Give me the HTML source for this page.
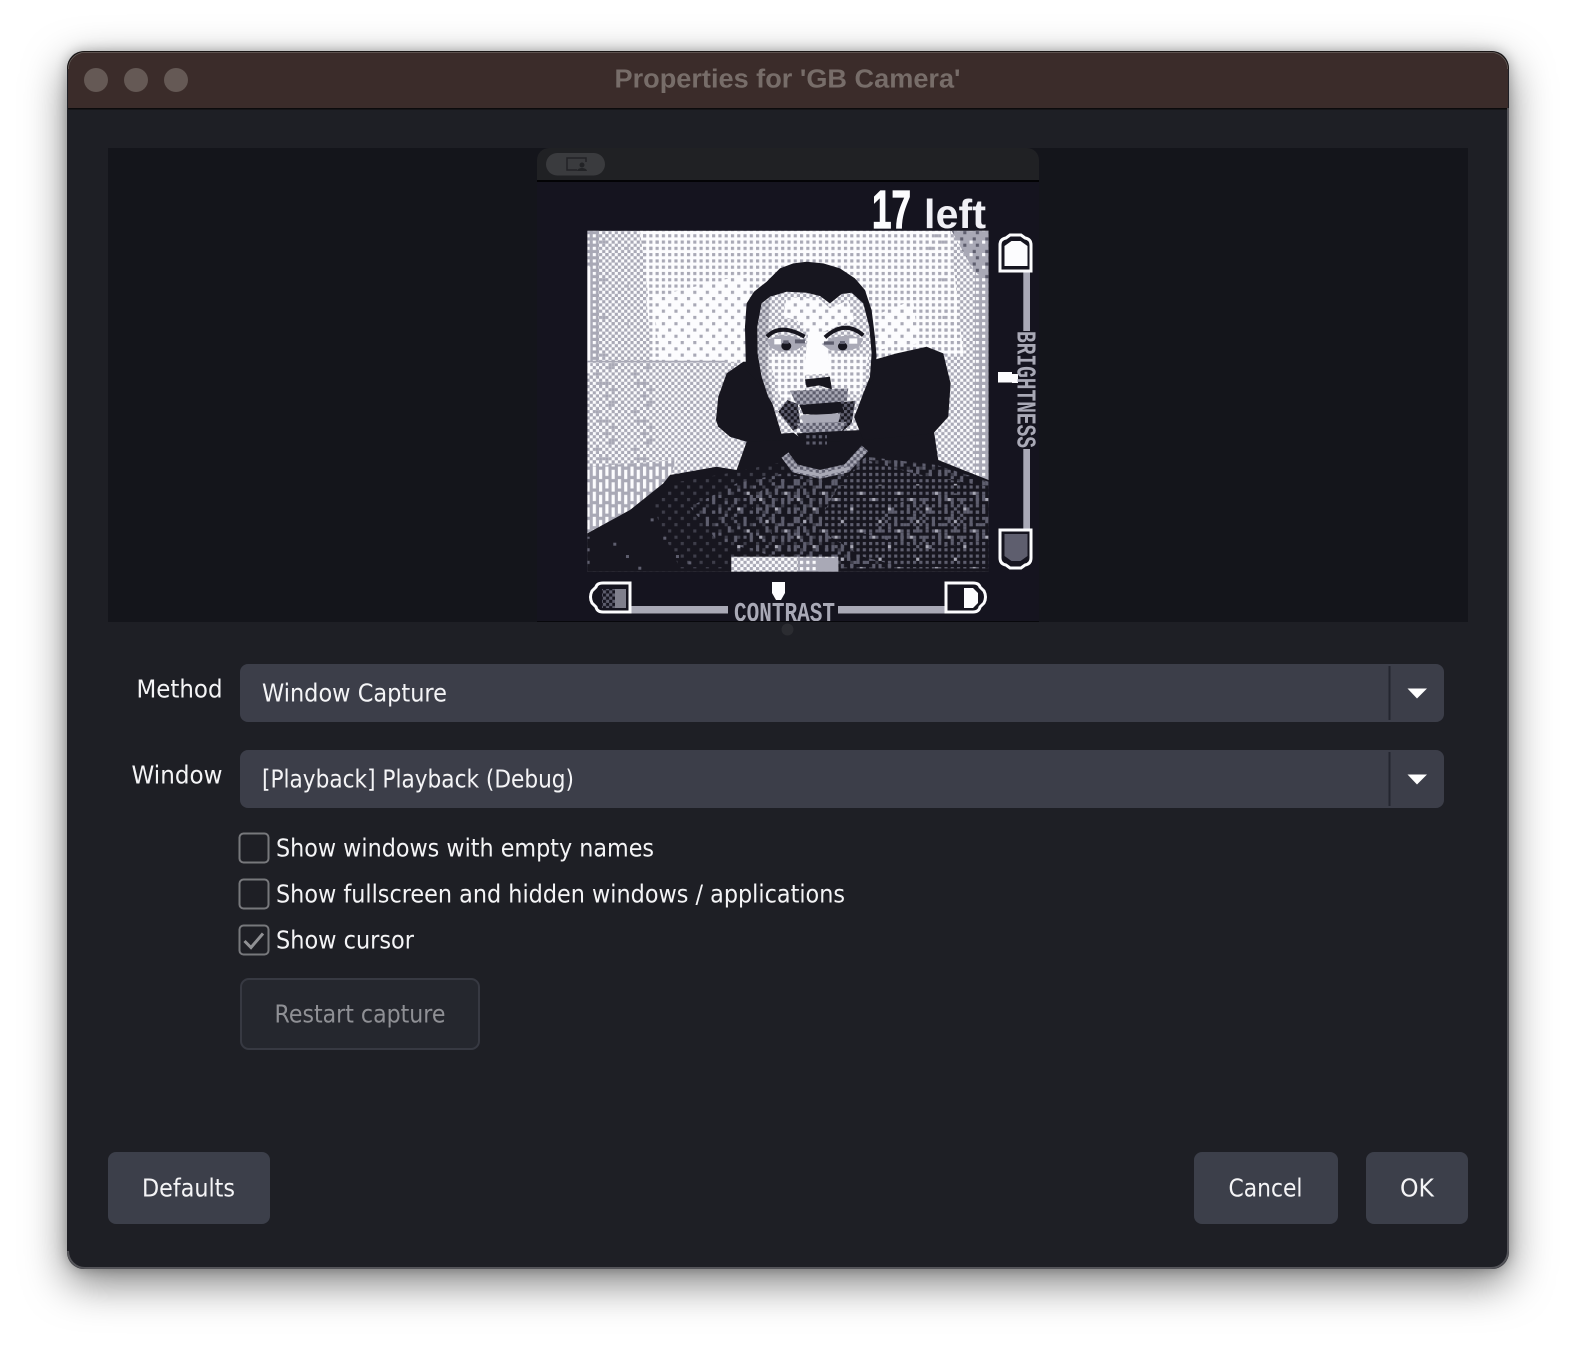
<!DOCTYPE html>
<html><head><meta charset="utf-8"><title>Properties for 'GB Camera'</title>
<style>
html,body{margin:0;padding:0;background:#fff;width:1576px;height:1352px;overflow:hidden}
#win{position:absolute;left:67px;top:51px;width:1442px;height:1218px;box-sizing:border-box;border-radius:17px;background:#1e1f25;box-shadow:0 14px 42px rgba(0,0,0,.5),0 0 12px rgba(0,0,0,.25)}
svg{position:absolute;left:0;top:0}
.t{font-family:"DejaVu Sans","Liberation Sans",sans-serif;font-size:24.5px;fill:#f4f4f6}
</style></head><body>
<div id="win"></div>
<svg width="1576" height="1352" viewBox="0 0 1576 1352" xmlns="http://www.w3.org/2000/svg">
<defs>
<pattern id="a" width="18.84" height="18.84" patternUnits="userSpaceOnUse"><rect width="19" height="19" fill="#fcfcfe"/><rect width="9.42" height="9.42" fill="#a9a9b6"/></pattern>
<pattern id="a2" width="37.68" height="37.68" patternUnits="userSpaceOnUse"><rect width="38" height="38" fill="#fcfcfe"/><rect width="9.42" height="9.42" fill="#a9a9b6"/><rect x="18.84" y="18.84" width="9.42" height="9.42" fill="#a9a9b6"/></pattern>
<pattern id="b" width="18.84" height="18.84" patternUnits="userSpaceOnUse"><rect width="19" height="19" fill="#fcfcfe"/><rect width="9.42" height="9.42" fill="#a9a9b6"/><rect x="9.42" y="9.42" width="9.42" height="9.42" fill="#a9a9b6"/></pattern>
<pattern id="c" width="18.84" height="18.84" patternUnits="userSpaceOnUse"><rect width="19" height="19" fill="#a9a9b6"/><rect width="9.42" height="9.42" fill="#fcfcfe"/></pattern>
<pattern id="vs" width="37.68" height="37.68" patternUnits="userSpaceOnUse"><rect width="38" height="38" fill="#a9a9b6"/><rect width="9.42" height="28" fill="#fcfcfe"/><rect x="18.84" y="9.42" width="9.42" height="28" fill="#fcfcfe"/></pattern>
<pattern id="cd" width="37.68" height="37.68" patternUnits="userSpaceOnUse"><rect width="38" height="38" fill="#a9a9b6"/><rect width="9.42" height="9.42" fill="#fcfcfe"/><rect x="18.84" y="9.42" width="9.42" height="9.42" fill="#5e5e6e"/><rect x="9.42" y="28.26" width="9.42" height="9.42" fill="#5e5e6e"/></pattern>
<pattern id="fd" width="18.84" height="18.84" patternUnits="userSpaceOnUse"><rect width="19" height="19" fill="#a9a9b6"/><rect width="9.42" height="9.42" fill="#5e5e6e"/><rect x="9.42" y="9.42" width="9.42" height="9.42" fill="#5e5e6e"/></pattern>
<pattern id="d1" width="37.68" height="37.68" patternUnits="userSpaceOnUse"><rect width="38" height="38" fill="#17161f"/><rect width="9.42" height="9.42" fill="#5e5e6e"/><rect x="18.84" y="18.84" width="9.42" height="9.42" fill="#5e5e6e"/></pattern>
<pattern id="d3" width="18.84" height="18.84" patternUnits="userSpaceOnUse"><rect width="19" height="19" fill="#17161f"/><rect width="9.42" height="9.42" fill="#5e5e6e"/><rect x="9.42" y="9.42" width="9.42" height="9.42" fill="#5e5e6e"/></pattern>
<pattern id="d2" width="18.84" height="18.84" patternUnits="userSpaceOnUse"><rect width="19" height="19" fill="#17161f"/><rect width="9.42" height="9.42" fill="#5e5e6e"/></pattern>
<pattern id="n1" width="113.04" height="113.04" patternUnits="userSpaceOnUse"><path transform="scale(9.42)" fill="#5e5e6e" d="M1 0h1v2h-1zM5 1h1v1h-1zM8 0h1v3h-1zM11 2h1v1h-1zM3 3h1v2h-1zM6 3h1v1h-1zM0 5h1v1h-1zM10 5h1v3h-1zM5 6h1v2h-1zM2 7h1v1h-1zM8 6h1v1h-1zM0 9h1v2h-1zM3 9h1v1h-1zM7 9h1v2h-1zM10 10h1v1h-1zM5 11h1v1h-1zM2 11h1v1h-1z"/></pattern>
<pattern id="n2" width="113.04" height="113.04" patternUnits="userSpaceOnUse" patternTransform="translate(47.1 28.26)"><path transform="scale(9.42)" fill="#5e5e6e" d="M1 0h1v2h-1zM5 1h1v1h-1zM8 0h1v3h-1zM11 2h1v1h-1zM3 3h1v2h-1zM6 3h1v1h-1zM0 5h1v1h-1zM10 5h1v3h-1zM5 6h1v2h-1zM2 7h1v1h-1zM8 6h1v1h-1zM0 9h1v2h-1zM3 9h1v1h-1zM7 9h1v2h-1zM10 10h1v1h-1zM5 11h1v1h-1zM2 11h1v1h-1z"/></pattern>
<pattern id="n3" width="113.04" height="113.04" patternUnits="userSpaceOnUse"><path transform="scale(9.42)" fill="#a9a9b6" d="M3 1h1v1h-1zM9 4h1v1h-1zM1 6h1v1h-1zM6 9h1v1h-1z"/></pattern>
<pattern id="n4" width="113.04" height="113.04" patternUnits="userSpaceOnUse"><path transform="scale(9.42)" fill="#a9a9b6" d="M1 0h1v1h-1zM5 1h1v1h-1zM9 2h1v1h-1zM3 3h1v1h-1zM7 3h1v1h-1zM0 5h1v1h-1zM10 5h1v1h-1zM5 7h1v1h-1zM2 7h1v1h-1zM8 6h1v1h-1zM0 9h1v1h-1zM3 9h1v1h-1zM7 9h1v1h-1zM10 10h1v1h-1zM5 11h1v1h-1zM2 11h1v1h-1z"/></pattern>
<pattern id="n5" width="113.04" height="113.04" patternUnits="userSpaceOnUse"><path transform="scale(9.42)" fill="#a9a9b6" d="M0 0h1v1h-1zM4 0h1v1h-1zM10 2h1v1h-1zM2 2h1v1h-1zM6 4h1v1h-1zM0 6h1v1h-1zM9 6h1v1h-1zM4 8h1v1h-1zM11 8h1v1h-1zM2 10h1v1h-1zM7 10h1v1h-1z"/></pattern>
<pattern id="sm" width="6.280" height="6.280" patternUnits="userSpaceOnUse"><rect width="7" height="7" fill="#15141f"/><rect width="3.140" height="3.140" fill="#5e5e6e"/><rect x="3.140" y="3.140" width="3.140" height="3.140" fill="#5e5e6e"/></pattern>
<clipPath id="pv"><rect x="108" y="148" width="1360" height="474"/></clipPath>
</defs>

<!-- title bar -->
<path d="M68 108V69a17 17 0 0 1 17-17H1491a17 17 0 0 1 17 17V108Z" fill="#3b2c2a"/>
<path d="M68 69a17 17 0 0 1 17-17H1491a17 17 0 0 1 17 17" fill="none" stroke="#6a605c" stroke-width="1.5"/>
<path d="M67.5 69a17.500 17.500 0 0 1 17.500-17.500H1491a17.500 17.500 0 0 1 17.500 17.500" fill="none" stroke="#1a1615" stroke-width="1"/>
<rect x="68" y="108" width="1440" height="1.500" fill="#0c0b0c"/>
<circle cx="96" cy="80" r="12" fill="#655955"/><circle cx="136" cy="80" r="12" fill="#655955"/><circle cx="176" cy="80" r="12" fill="#655955"/>
<text x="614.500" y="87.500" font-family="'Liberation Sans',sans-serif" font-weight="700" font-size="25.500" fill="#776d69" textLength="346" lengthAdjust="spacingAndGlyphs">Properties for 'GB Camera'</text>
<path d="M68 1251a17 17 0 0 0 17 17H1491a17 17 0 0 0 17-17V108" fill="none" stroke="#55555a" stroke-width="2"/>

<!-- preview -->
<rect x="108" y="148" width="1360" height="474" fill="#14151b"/>
<g clip-path="url(#pv)">
<path d="M537 622V160a12 12 0 0 1 12-12H1027a12 12 0 0 1 12 12V622Z" fill="#15141f"/>
<path d="M537 180V160a12 12 0 0 1 12-12H1027a12 12 0 0 1 12 12V180Z" fill="#202124"/>
<rect x="537" y="180" width="502" height="2" fill="#030305"/>
<rect x="546" y="153" width="59" height="22.500" rx="11.250" fill="#3a3b3e"/>
<path d="M577 170H567V158H586V162" fill="none" stroke="#222326" stroke-width="1.500"/>
<circle cx="582" cy="165" r="2.500" fill="#222326"/><path d="M577 171a5 3 0 0 1 10 0Z" fill="#222326"/>

<!-- 17 left -->
<text x="872" y="228" font-family="'Liberation Sans',sans-serif" font-weight="700" font-size="54" fill="#fcfcfe" stroke="#fcfcfe" stroke-width="1.200" textLength="39" lengthAdjust="spacingAndGlyphs">17</text>
<text x="924" y="228" font-family="'Liberation Sans',sans-serif" font-weight="700" font-size="41" fill="#f0f0f5" textLength="62" lengthAdjust="spacing">left</text>

<!-- photo -->
<svg x="587.3" y="230.7" width="401.3" height="341" viewBox="172 272 1204 1023" preserveAspectRatio="none">
<rect x="172" y="272" width="1204" height="1023" fill="url(#b)"/>
<polygon points="330,272 1260,272 1300,640 1040,665 380,665" fill="url(#a)"/>
<polygon points="330,272 1260,272 1300,640 1040,665 380,665" fill="url(#n5)"/>
<polygon points="400,280 1170,280 1235,420 1240,630 1040,635 1040,440 650,480 640,665 365,665 350,480" fill="url(#a)"/>
<polygon points="370,470 660,400 650,665 390,665" fill="url(#a2)"/>
<polygon points="1050,520 1150,480 1165,610 1040,630" fill="url(#a2)"/>
<rect x="172" y="272" width="34" height="393" fill="url(#c)"/>
<rect x="206" y="272" width="90" height="393" fill="url(#n5)"/>
<rect x="172" y="380" width="9" height="320" fill="#fcfcfe"/>
<polygon points="172,665 360,665 400,1010 172,1040" fill="url(#n4)"/>
<polygon points="172,980 440,960 410,1030 300,1110 172,1180" fill="url(#vs)"/>
<rect x="172" y="662" width="420" height="5" fill="#a9a9b6"/>
<rect x="1335" y="272" width="41" height="750" fill="url(#c)"/>
<polygon points="1265,272 1376,272 1376,430 1330,390" fill="url(#cd)"/>

<polygon points="172,1180 300,1110 400,1030 420,1005 560,980 620,990 650,905 760,880 1000,870 1210,860 1225,960 1300,990 1376,1020 1376,1295 172,1295" fill="#17161f"/>
<polygon points="558,840 565,770 590,700 640,665 690,665 760,900 650,905 600,890 565,860" fill="#17161f"/>
<polygon points="1030,660 1100,640 1190,620 1240,640 1262,730 1255,830 1210,880 1000,900 960,800" fill="#17161f"/>
<polygon points="648,690 645,560 650,490 672,455 710,425 750,385 790,370 830,365 880,370 930,385 975,415 1005,450 1025,510 1035,590 1040,650 1030,720 900,800 720,760" fill="#17161f"/>

<!-- sweater -->
<polygon points="370,1100 420,1030 620,995 760,965 800,1010 900,1020 1000,950 1220,975 1376,1025 1376,1285 900,1285 450,1285 400,1180" fill="url(#d1)" opacity=".55"/>
<polygon points="480,1100 620,1030 760,1000 900,1020 1010,950 1220,975 1376,1025 1376,1285 860,1285 700,1240 560,1200" fill="url(#n1)"/>
<polygon points="650,1080 760,1010 900,1025 1010,950 1220,975 1376,1030 1376,1285 900,1285 760,1230" fill="url(#n2)"/>
<polygon points="880,1120 930,1030 1010,960 1150,1000 1376,1040 1376,1285 1130,1285 1000,1250 900,1190" fill="url(#d2)"/>
<polygon points="1000,1180 1100,1090 1220,1060 1376,1060 1376,1200 1180,1230" fill="url(#n1)"/>
<polygon points="620,1040 1376,1030 1376,1285 620,1285" fill="url(#n3)"/>
<rect x="250" y="1208" width="9" height="9" fill="#5e5e6e"/><rect x="288" y="1245" width="9" height="9" fill="#5e5e6e"/><rect x="325" y="1280" width="9" height="9" fill="#5e5e6e"/><rect x="400" y="1190" width="9" height="9" fill="#5e5e6e"/><rect x="438" y="1245" width="9" height="9" fill="#5e5e6e"/><rect x="362" y="1135" width="9" height="9" fill="#5e5e6e"/><rect x="475" y="1264" width="9" height="9" fill="#5e5e6e"/>
<rect x="172" y="1190" width="8" height="105" fill="url(#d1)"/>
<rect x="604" y="1250" width="200" height="45" fill="url(#b)"/>
<rect x="804" y="1250" width="121" height="45" fill="url(#c)"/>
<rect x="865" y="1260" width="60" height="35" fill="#a9a9b6"/>

<!-- collar -->
<polyline points="765,945 795,985 870,1003 950,985 1005,925" fill="none" stroke="url(#fd)" stroke-width="26"/>
<polyline points="790,990 870,1005 955,985" fill="none" stroke="#a9a9b6" stroke-width="9"/>

<!-- face -->
<polygon points="683,640 682,560 695,490 720,470 770,455 830,458 870,468 900,490 935,462 965,458 1000,490 1018,560 1025,640 1020,710 1000,760 985,800 965,850 930,890 880,905 820,900 780,870 745,820 715,770 695,710" fill="url(#b)"/>
<polygon points="683,640 682,560 695,490 722,470 715,560 712,700 735,800 715,770 695,710" fill="url(#fd)" opacity=".5"/>
<polygon points="770,470 870,478 900,505 955,480 972,540 880,575 850,600 800,540 760,530" fill="url(#a2)"/>
<polygon points="835,580 890,575 900,700 820,705" fill="#fcfcfe"/>
<polygon points="715,650 825,640 825,785 755,785" fill="url(#a)"/>
<polygon points="895,640 1015,650 990,770 900,735" fill="url(#a)"/>
<!-- eyes -->
<polygon points="710,600 750,585 800,590 830,610 800,630 750,636 720,622" fill="#a9a9b6"/>
<polygon points="875,612 910,592 960,585 1000,598 985,624 940,634 900,630" fill="#a9a9b6"/>
<rect x="733" y="597" width="20" height="16" fill="#fcfcfe"/><rect x="958" y="595" width="24" height="16" fill="#fcfcfe"/>
<rect x="795" y="598" width="30" height="12" fill="#5e5e6e"/><rect x="882" y="604" width="30" height="10" fill="#5e5e6e"/>
<ellipse cx="769" cy="618" rx="15" ry="13" fill="#17161f"/><ellipse cx="938" cy="619" rx="14" ry="12" fill="#17161f"/>
<rect x="760" y="601" width="16" height="10" fill="#5e5e6e"/><rect x="930" y="603" width="15" height="9" fill="#5e5e6e"/>
<path d="M711 590Q752 548 824 590" fill="none" stroke="#17161f" stroke-width="12"/>
<path d="M885 592Q945 538 1000 586" fill="none" stroke="#17161f" stroke-width="12"/>
<!-- nose, mouth -->
<polygon points="780,752 955,745 950,788 800,795" fill="url(#fd)"/>
<polygon points="745,815 772,780 803,792 812,860 790,872" fill="url(#d3)"/>
<polygon points="930,788 976,782 965,850 930,882 918,850" fill="url(#d3)"/>
<polygon points="825,718 900,710 906,748 868,736 830,742" fill="#17161f"/>
<polygon points="808,795 932,785 942,815 882,826 820,822" fill="#17161f"/>
<polygon points="812,826 932,820 925,848 820,850" fill="#a9a9b6"/>
<polygon points="800,850 950,845 932,882 818,882" fill="url(#fd)"/>
<polygon points="800,880 945,872 930,905 815,905" fill="#17161f"/>
<rect x="825" y="884" width="66" height="30" fill="url(#d2)"/>
</svg>

<!-- brightness -->
<rect x="1023.300" y="272" width="6.700" height="59" fill="#a9a9b6"/>
<rect x="1023.300" y="449" width="6.700" height="80" fill="#a9a9b6"/>
<path d="M1000 271V245q0-6 6-7l4-3h11l4 3q6 1 6 7V271Z" fill="#15141f" stroke="#fcfcfe" stroke-width="3"/>
<path d="M1004.500 266V246l7-5h9l7 5V266Z" fill="#fcfcfe"/>
<path d="M1000 530V558q0 6 6 7l4 3h11l4-3q6-1 6-7V530Z" fill="#15141f" stroke="#fcfcfe" stroke-width="3"/>
<path d="M1004.500 534V556l7 5h9l7-5V534Z" fill="#5e5e6e"/>
<rect x="998" y="372" width="14" height="10.500" fill="#fcfcfe"/><rect x="1012" y="374" width="6" height="9" fill="#fcfcfe"/>
<text transform="translate(1017.500 331) rotate(90)" font-family="'Liberation Mono',monospace" font-weight="700" font-size="27" fill="#a9a9b6" textLength="117" lengthAdjust="spacingAndGlyphs">BRIGHTNESS</text>

<!-- contrast -->
<rect x="631" y="606" width="97" height="7.500" fill="#a9a9b6"/>
<rect x="838" y="606" width="107" height="7.500" fill="#a9a9b6"/>
<path d="M630 583H603q-6 0-7 4l-4 4q-3 6 0 12l4 4q1 5 7 5H630Z" fill="#15141f" stroke="#fcfcfe" stroke-width="3"/>
<rect x="602" y="589" width="13" height="19" fill="url(#sm)"/><rect x="615" y="589" width="11" height="19" fill="#7f7f8c"/>
<path d="M946 583H973q6 0 7 4l4 4q3 6 0 12l-4 4q-1 5-7 5H946Z" fill="#15141f" stroke="#fcfcfe" stroke-width="3"/>
<path d="M964 588H973l5 5v10l-5 5H964Z" fill="#fcfcfe"/>
<path d="M772 582H785V593L781 600H776L772 593Z" fill="#fcfcfe"/>
<text x="734" y="621" font-family="'Liberation Mono',monospace" font-weight="700" font-size="27" fill="#a9a9b6" textLength="101" lengthAdjust="spacingAndGlyphs">CONTRAST</text>
</g>
<rect x="537" y="621" width="502" height="1" fill="#08080c"/>
<circle cx="787.500" cy="629.500" r="6" fill="#2b2c31"/>

<!-- combos -->
<rect x="240" y="664" width="1204" height="58" rx="8" fill="#3c3e49"/>
<rect x="1388.500" y="666" width="2" height="54" fill="#242630"/>
<path d="M1407.500 688.500H1427L1417 698.500Z" fill="#fff"/>
<rect x="240" y="750" width="1204" height="58" rx="8" fill="#3c3e49"/>
<rect x="1388.500" y="752" width="2" height="54" fill="#242630"/>
<path d="M1407.500 774.500H1427L1417 784.500Z" fill="#fff"/>

<text class="t" x="136.500" y="697.500" textLength="86" lengthAdjust="spacingAndGlyphs">Method</text>
<text class="t" x="131.500" y="783.500" textLength="91" lengthAdjust="spacingAndGlyphs">Window</text>
<text class="t" x="262" y="701.500" textLength="185" lengthAdjust="spacingAndGlyphs">Window Capture</text>
<text class="t" x="262" y="787.500" textLength="312" lengthAdjust="spacingAndGlyphs">[Playback] Playback (Debug)</text>

<!-- checkboxes -->
<rect x="239.500" y="833.500" width="29" height="29" rx="4" fill="none" stroke="#77787c" stroke-width="2"/>
<rect x="239.500" y="879.500" width="29" height="29" rx="4" fill="none" stroke="#77787c" stroke-width="2"/>
<rect x="239.500" y="925.500" width="29" height="29" rx="4" fill="none" stroke="#77787c" stroke-width="2"/>
<path d="M244.500 941L251 947.500L263 933.500" fill="none" stroke="#909194" stroke-width="3"/>
<text class="t" x="276" y="856.500" textLength="378" lengthAdjust="spacingAndGlyphs">Show windows with empty names</text>
<text class="t" x="276" y="902.500" textLength="569" lengthAdjust="spacingAndGlyphs">Show fullscreen and hidden windows / applications</text>
<text class="t" x="276" y="948.500" textLength="138" lengthAdjust="spacingAndGlyphs">Show cursor</text>

<rect x="241" y="979" width="238" height="70" rx="8" fill="#25272e" stroke="#373942" stroke-width="2"/>
<text class="t" x="274.500" y="1022.500" textLength="171" lengthAdjust="spacingAndGlyphs" style="fill:#8f9095">Restart capture</text>

<!-- buttons -->
<rect x="108" y="1152" width="162" height="72" rx="8" fill="#3c3f4a"/>
<rect x="1194" y="1152" width="144" height="72" rx="8" fill="#3c3f4a"/>
<rect x="1366" y="1152" width="102" height="72" rx="8" fill="#3c3f4a"/>
<text class="t" x="142" y="1196.500" textLength="93" lengthAdjust="spacingAndGlyphs">Defaults</text>
<text class="t" x="1228.500" y="1196.500" textLength="74" lengthAdjust="spacingAndGlyphs">Cancel</text>
<text class="t" x="1400" y="1196.500" textLength="34" lengthAdjust="spacingAndGlyphs">OK</text>
</svg>
</body></html>
